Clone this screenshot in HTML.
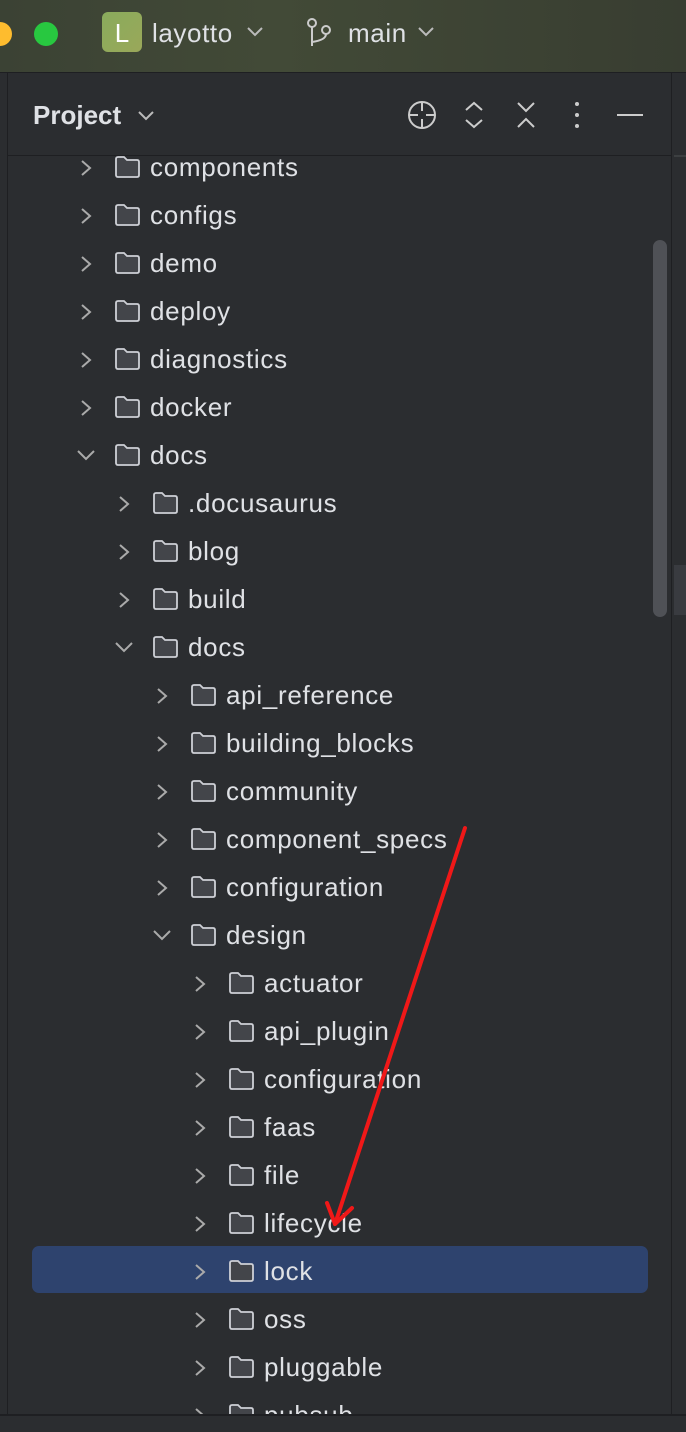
<!DOCTYPE html>
<html><head><style>
html,body{margin:0;width:686px;height:1432px;overflow:hidden}
body{background:#2b2d30;font-family:"Liberation Sans",sans-serif;position:relative}
.tb{position:absolute;left:0;top:0;width:686px;height:72px;background:linear-gradient(90deg,#3b4234 0%,#424a37 40%,#383d31 100%);border-bottom:1px solid #1e1f22}
.a{position:absolute}
.row{position:absolute;height:48px;line-height:48px;color:#dfe1e5;font-size:26px;letter-spacing:0.7px}
.fold{position:absolute;width:27px;height:22px;top:13px}
.txt{position:absolute;top:0px;white-space:nowrap}
.chev{position:absolute;top:16px}
</style></head><body>
<div class="tb"></div>
<div class="a" style="left:-12px;top:22px;width:24px;height:24px;border-radius:50%;background:#febc2e"></div>
<div class="a" style="left:34px;top:22px;width:24px;height:24px;border-radius:50%;background:#28c840"></div>
<div class="a" style="left:102px;top:12px;width:40px;height:40px;border-radius:6px;background:linear-gradient(135deg,#89ab5c,#9aa85a);color:#fff;font-size:26px;line-height:42px;text-align:center">L</div>
<div class="a" style="left:152px;top:18px;color:#dfe1e5;font-size:26px;letter-spacing:0.6px">layotto</div>
<svg class="a" style="left:246px;top:26px" width="18" height="12"><path d="M2 2l7 7 7-7" stroke="#bbb" stroke-width="2" fill="none"/></svg>
<svg class="a" style="left:304px;top:18px" width="30" height="30"><circle cx="8" cy="5" r="4" stroke="#ccc" stroke-width="2" fill="none"/><circle cx="22" cy="12" r="4" stroke="#ccc" stroke-width="2" fill="none"/><path d="M8 9v19M22 16q0 6-14 8" stroke="#ccc" stroke-width="2" fill="none"/></svg>
<div class="a" style="left:348px;top:18px;color:#dfe1e5;font-size:26px;letter-spacing:0.6px">main</div>
<svg class="a" style="left:417px;top:26px" width="18" height="12"><path d="M2 2l7 7 7-7" stroke="#bbb" stroke-width="2" fill="none"/></svg>

<div class="a" style="left:0;top:73px;width:7px;height:1359px;background:#2b2d30;border-right:1px solid #1e1f22"></div>
<div class="a" style="left:671px;top:73px;width:15px;height:1359px;background:#2b2d30;border-left:1px solid #1e1f22"></div>
<div class="a" style="left:674px;top:155px;width:12px;height:2px;background:#3c3f41"></div>
<div class="a" style="left:674px;top:565px;width:12px;height:50px;background:#393b40"></div>
<div class="a" style="left:8px;top:155px;width:663px;height:1px;background:#1e1f22"></div>
<div class="a" style="left:33px;top:100px;color:#dfe1e5;font-size:26px;font-weight:bold">Project</div>
<svg class="a" style="left:137px;top:110px" width="18" height="12"><path d="M2 2l7 7 7-7" stroke="#bbb" stroke-width="2" fill="none"/></svg>
<svg class="a" style="left:406px;top:99px" width="32" height="32"><circle cx="16" cy="16" r="13" stroke="#ccc" stroke-width="2" fill="none"/><path d="M16 3v9M16 20v9M3 16h9M20 16h9" stroke="#ccc" stroke-width="2"/></svg>
<svg class="a" style="left:463px;top:101px" width="22" height="28"><path d="M3 9l8-7 8 7M3 19l8 7 8-7" stroke="#ccc" stroke-width="2" fill="none"/></svg>
<svg class="a" style="left:515px;top:101px" width="22" height="28"><path d="M3 2l8 8 8-8M3 26l8-8 8 8" stroke="#ccc" stroke-width="2" fill="none"/></svg>
<svg class="a" style="left:572px;top:101px" width="10" height="28"><circle cx="5" cy="3" r="2" fill="#ccc"/><circle cx="5" cy="14" r="2" fill="#ccc"/><circle cx="5" cy="25" r="2" fill="#ccc"/></svg>
<div class="a" style="left:617px;top:114px;width:26px;height:2px;background:#ccc"></div>

<div class="a" style="left:32px;top:1246px;width:616px;height:47px;border-radius:7px;background:#2e436e"></div>
<div class="a" style="left:653px;top:240px;width:14px;height:377px;border-radius:7px;background:#4f5156"></div>

<div id="tree"></div>
<script>
var rows=[["components",0],["configs",0],["demo",0],["deploy",0],["diagnostics",0],["docker",0],["docs",0,1],[".docusaurus",1],["blog",1],["build",1],["docs",1,1],["api_reference",2],["building_blocks",2],["community",2],["component_specs",2],["configuration",2],["design",2,1],["actuator",3],["api_plugin",3],["configuration",3],["faas",3],["file",3],["lifecycle",3],["lock",3],["oss",3],["pluggable",3],["pubsub",3]];
var h="";
rows.forEach(function(r,i){
 var y=143+48*i,L=r[1]*38;
 var chev=r[2]?'<svg class="chev" style="left:'+(76+L)+'px" width="20" height="16"><path d="M2 4l8 8 8-8" stroke="#aaa" stroke-width="2" fill="none"/></svg>':'<svg class="chev" style="left:'+(79+L)+'px" width="14" height="18"><path d="M3 2l8 7-8 7" stroke="#aaa" stroke-width="2" fill="none"/></svg>';
 h+='<div class="row" style="left:0;top:'+y+'px;width:650px">'+chev+
 '<svg class="fold" style="left:'+(114+L)+'px" viewBox="0 0 27 22"><path d="M2 3q0-2 2-2h6l3 3h10q2 0 2 2v13q0 2-2 2H4q-2 0-2-2z" fill="#43454a" stroke="#ced0d6" stroke-width="1.8"/></svg>'+
 '<span class="txt" style="left:'+(150+L)+'px">'+r[0]+'</span></div>';
});
document.getElementById("tree").innerHTML=h;
</script>
<div class="a" style="left:0;top:1414px;width:686px;height:18px;background:#2b2d30;border-top:2px solid #1e1f22"></div>
<svg class="a" style="left:0;top:0" width="686" height="1432"><path d="M465 828L335 1224" stroke="#f01818" stroke-width="4" stroke-linecap="round"/><path d="M327 1203L335 1224L352 1208" stroke="#f01818" stroke-width="4" fill="none" stroke-linecap="round" stroke-linejoin="round"/></svg>
</body></html>
